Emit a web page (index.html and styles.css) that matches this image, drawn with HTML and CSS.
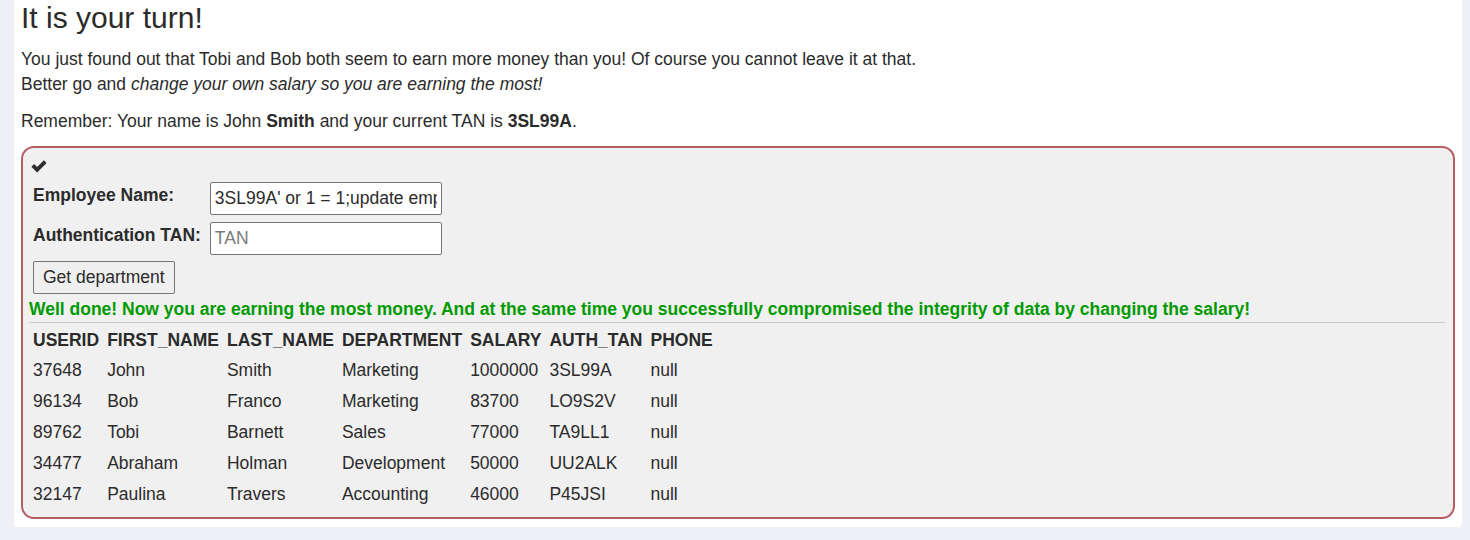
FILE: index.html
```html
<!DOCTYPE html>
<html>
<head>
<meta charset="utf-8">
<link rel="stylesheet" href="styles.css">
</head>
<body>
<div class="panel">
  <h2 class="title">It is your turn!</h2>
  <p class="intro">You just found out that Tobi and Bob both seem to earn more money than you! Of course you cannot leave it at that.<br>Better go and <em>change your own salary so you are earning the most!</em></p>
  <p class="intro">Remember: Your name is John <b>Smith</b> and your current TAN is <b>3SL99A</b>.</p>
  <div class="attack">
    <div class="check"><svg width="16" height="13" viewBox="0 0 16 13"><path d="M0.4 6.7 L3.1 4.0 L6.1 7.0 L12.9 0.2 L15.6 2.9 L6.1 12.4 Z" fill="#2e2e2e"/></svg></div>
    <table class="form">
      <tr><td class="lbl">Employee Name:</td><td><input class="field" type="text" value="3SL99A' or 1 = 1;update employees set salary=1000000 where last_name='Smith';--"></td></tr>
      <tr><td class="lbl">Authentication TAN:</td><td><input class="field" type="text" placeholder="TAN"></td></tr>
      <tr><td class="btncell" colspan="2"><button class="btn" type="button">Get department</button></td></tr>
    </table>
    <div class="feedback">Well done! Now you are earning the most money. And at the same time you successfully compromised the integrity of data by changing the salary!</div>
    <hr class="rule">
    <table class="data">
      <tr><th>USERID</th><th>FIRST_NAME</th><th>LAST_NAME</th><th>DEPARTMENT</th><th>SALARY</th><th>AUTH_TAN</th><th>PHONE</th></tr>
      <tr><td>37648</td><td>John</td><td>Smith</td><td>Marketing</td><td>1000000</td><td>3SL99A</td><td>null</td></tr>
      <tr><td>96134</td><td>Bob</td><td>Franco</td><td>Marketing</td><td>83700</td><td>LO9S2V</td><td>null</td></tr>
      <tr><td>89762</td><td>Tobi</td><td>Barnett</td><td>Sales</td><td>77000</td><td>TA9LL1</td><td>null</td></tr>
      <tr><td>34477</td><td>Abraham</td><td>Holman</td><td>Development</td><td>50000</td><td>UU2ALK</td><td>null</td></tr>
      <tr><td>32147</td><td>Paulina</td><td>Travers</td><td>Accounting</td><td>46000</td><td>P45JSI</td><td>null</td></tr>
    </table>
  </div>
</div>
</body>
</html>
```
FILE: styles.css
```css
html, body {
  margin: 0;
  padding: 0;
  background: #eef0f5;
}
body {
  font-family: "Liberation Sans", Arial, sans-serif;
  font-size: 17.5px;
  line-height: 25px;
  color: #2b2b2b;
}
.panel {
  margin-left: 14px;
  width: 1448px;
  background: #ffffff;
  border-radius: 0 0 4px 4px;
  padding: 0 7px 8px 7px;
  box-sizing: border-box;
}
.title {
  margin: 0 0 12px 0;
  padding-top: 1px;
  font-size: 30px;
  font-weight: 400;
  line-height: 34px;
  color: #2b2b2b;
}
.intro {
  margin: 0 0 12px 0;
}
.attack {
  margin-top: 3px;
  background: #f0f0f0;
  border: 2px solid #b85c63;
  border-radius: 13px;
  padding: 6px 6px 7px 6px;
}
.check {
  height: 25px;
  padding-left: 2px;
  padding-top: 1px;
  box-sizing: border-box;
}
.form {
  border-collapse: separate;
  border-spacing: 0;
}
.form td {
  padding: 3px 4px 4px 4px;
  vertical-align: top;
}
.form td.btncell {
  padding-top: 2px;
}
.lbl {
  font-weight: 700;
  padding-top: 4px !important;
  padding-right: 5px !important;
}
.field {
  width: 232px;
  height: 33px;
  box-sizing: border-box;
  border: 1px solid #767676;
  border-radius: 2px;
  background: #ffffff;
  font-family: "Liberation Sans", Arial, sans-serif;
  font-size: 17.5px;
  padding: 1px 4px;
  color: #2b2b2b;
}
.field::placeholder {
  color: #7a7a7a;
}
.btn {
  margin-top: 0;
  height: 33px;
  padding: 0 9px;
  border: 1px solid #767676;
  border-radius: 2px;
  background: #efefef;
  font-family: "Liberation Sans", Arial, sans-serif;
  font-size: 17.5px;
  color: #2b2b2b;
}
.feedback {
  margin-top: -1px;
  color: #009a00;
  font-weight: 700;
  line-height: 24px;
}
.rule {
  margin: 1px 2px 0 0;
  border: 0;
  border-top: 1px solid #cccccc;
}
.data {
  border-collapse: collapse;
  margin-top: 2px;
}
.data th, .data td {
  text-align: left;
  padding: 3px 4px 4px 4px;
  line-height: 24px;
  white-space: nowrap;
}
.data th {
  font-weight: 700;
  padding-bottom: 3px;
}
```
